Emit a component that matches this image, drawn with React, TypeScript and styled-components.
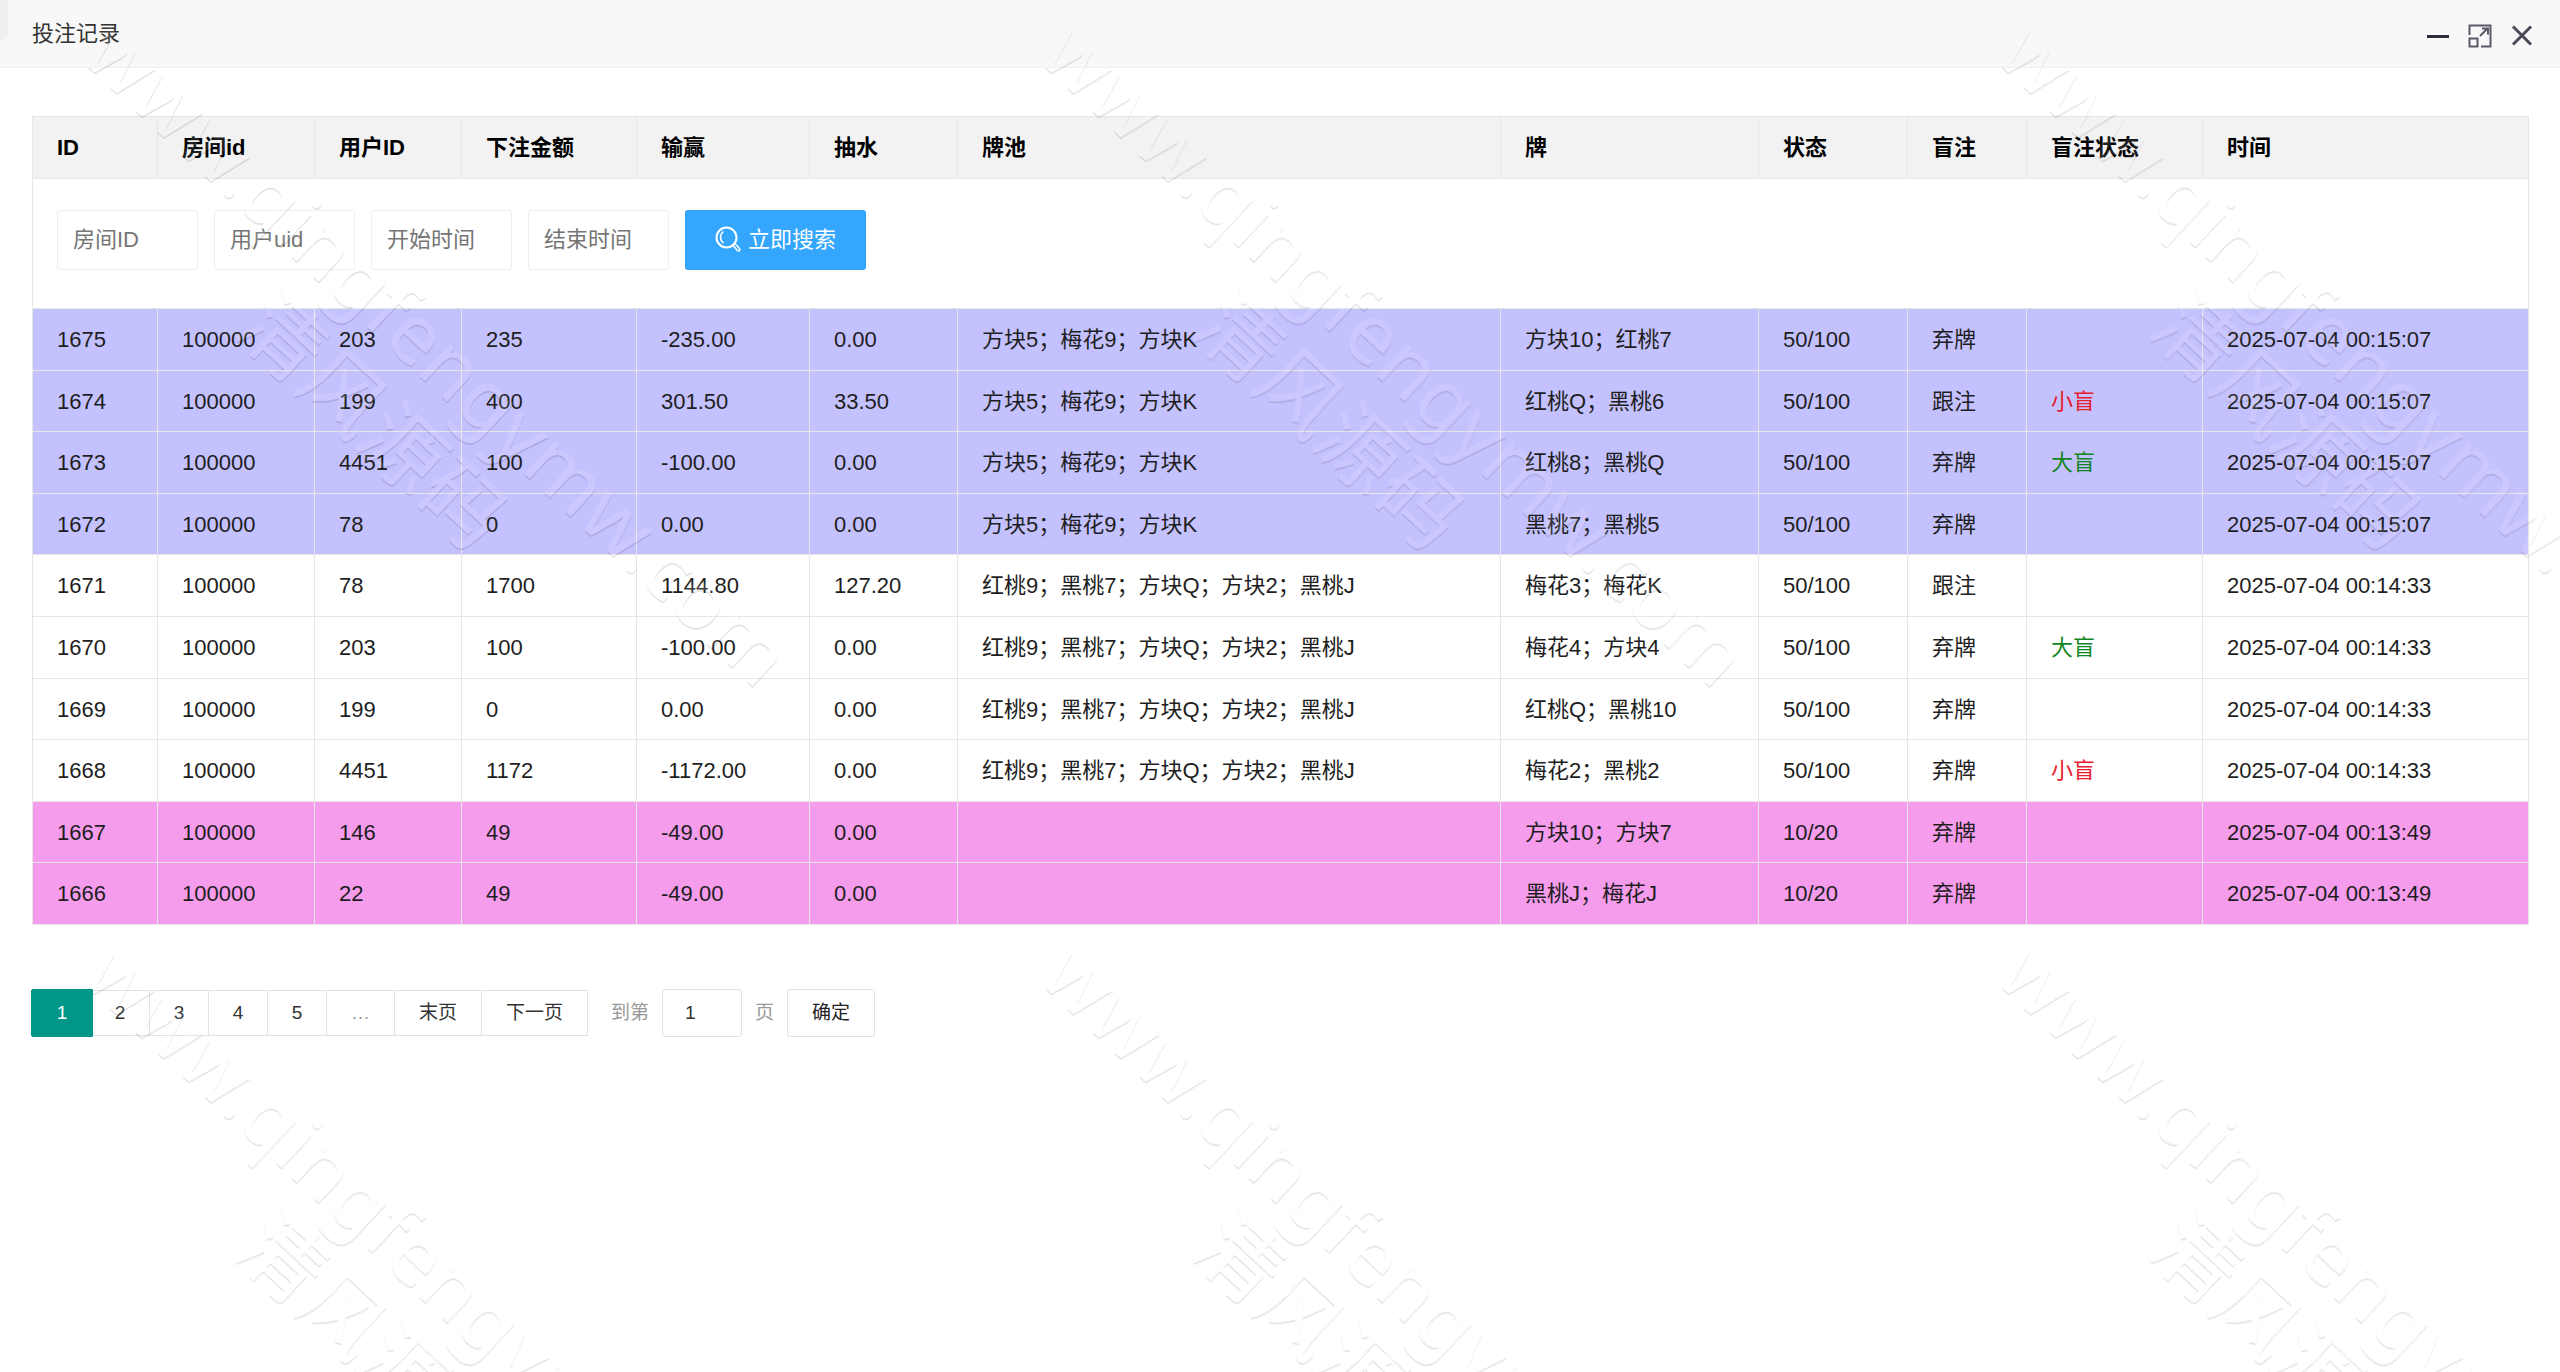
import React, { useState } from "react";
import styled, { createGlobalStyle, css } from "styled-components";

const GlobalStyle = createGlobalStyle`
  *, *::before, *::after { box-sizing: border-box; }
  html, body { margin: 0; background: #fff; }
  body, button, input {
    font-family: "Liberation Sans", "Noto Sans CJK SC", sans-serif;
    font-size: 22px;
    line-height: 30px;
    color: #1e1e1e;
  }
`;

const Window = styled.div`
  position: relative;
  min-height: 100vh;
  overflow: hidden;
  background: #fff;
`;

const TitleBar = styled.header`
  display: flex;
  align-items: center;
  justify-content: space-between;
  height: 68px;
  padding: 0 22px 0 32px;
  background: #f8f8f8;
  border-bottom: 1px solid #f0f0f0;

  &::before {
    content: "";
    position: absolute;
    left: 0;
    top: 0;
    width: 8px;
    height: 40px;
    background: #efefef;
    border-radius: 0 0 6px 0;
  }
`;

const Title = styled.h1`
  margin: 0;
  font-size: 22px;
  font-weight: 400;
  line-height: 30px;
  color: #333;
`;

const WindowControls = styled.div`
  display: flex;
  gap: 10px;
  padding-top: 4px;
`;

const ControlButton = styled.button`
  display: flex;
  width: 32px;
  height: 32px;
  align-items: center;
  justify-content: center;
  padding: 0;
  border: 0;
  background: none;
  cursor: pointer;
`;

const Content = styled.main`
  padding: 48px 32px;
`;

const Table = styled.table`
  width: 100%;
  table-layout: fixed;
  border-collapse: collapse;
`;

const Column = styled.col<{ $width: number }>`
  width: ${(p) => p.$width}px;
`;

const cell = css`
  padding: 1px 24px 0;
  border: 1px solid #e6e6e6;
  text-align: left;
  white-space: nowrap;
`;

const HeadCell = styled.th`
  ${cell}
  height: 62px;
  background: #f2f2f2;
  font-weight: 700;
  color: #000;
`;

const SearchCell = styled.td`
  ${cell}
  padding: 31px 24px 38px;
`;

type Tone = "violet" | "plain" | "pink";
const toneColors: Record<Tone, string> = { violet: "#c4c1ff", plain: "#fff", pink: "#f69ced" };

const Row = styled.tr<{ $tone: Tone }>`
  height: 62px;
  background: ${(p) => toneColors[p.$tone]};

  &:nth-child(5n + 2),
  &:nth-child(5n + 4) {
    height: 61px;
  }
`;

const Cell = styled.td`
  ${cell}
`;

const Blind = styled.span<{ $color: string }>`
  color: ${(p) => p.$color};
`;

const SearchForm = styled.form`
  display: flex;
  gap: 16px;
`;

const SearchInput = styled.input`
  width: 141px;
  height: 60px;
  padding: 0 15px;
  border: 1px solid #eee;
  border-radius: 3px;
  background: #fff;
  outline: none;

  &::placeholder { color: #757575; opacity: 1; }
`;

const SearchButton = styled.button`
  display: flex;
  align-items: center;
  gap: 7px;
  height: 60px;
  padding: 0 30px;
  border: 0;
  border-radius: 3px;
  background: #34a6fe;
  color: #fff;
  white-space: nowrap;
  cursor: pointer;
`;

const Pager = styled.nav`
  display: flex;
  align-items: center;
  margin: 64px 0 0 -1px;
  font-size: 19px;
  color: #999;
`;

const PageLink = styled.a<{ $wide?: boolean; $active?: boolean }>`
  min-width: 60px;
  height: 46px;
  margin-right: -1px;
  padding: 0 ${(p) => (p.$wide ? 24 : 8)}px;
  border: 1px solid #e2e2e2;
  background: #fff;
  color: #333;
  line-height: 44px;
  text-align: center;
  text-decoration: none;

  ${(p) =>
    p.$active &&
    css`
      z-index: 1;
      min-width: 62px;
      height: 48px;
      margin-right: -3px;
      border-color: #009688;
      border-radius: 2px 0 0 2px;
      background: #009688;
      color: #fff;
      line-height: 46px;
    `}
`;

const Ellipsis = styled.span`
  height: 46px;
  margin-right: -1px;
  padding: 0 24px;
  border: 1px solid #e2e2e2;
  line-height: 44px;
`;

const JumpForm = styled.form`
  display: flex;
  align-items: center;
  gap: 13px;
  margin-left: 24px;
`;

const JumpLabel = styled.label`
  display: flex;
  align-items: center;
  gap: 13px;
`;

const JumpInput = styled.input`
  width: 80px;
  height: 48px;
  padding: 0 22px;
  border: 1px solid #e2e2e2;
  border-radius: 3px;
  font-size: 19px;
  color: #333;
`;

const JumpButton = styled.button`
  height: 48px;
  padding: 0 24px;
  border: 1px solid #e2e2e2;
  border-radius: 3px;
  background: #fff;
  font-size: 19px;
  color: #222;
  cursor: pointer;
`;

const WatermarkLayer = styled.svg`
  position: absolute;
  inset: 0;
  width: 100%;
  height: 100%;
  pointer-events: none;
`;

const WatermarkText = styled.text`
  font-family: "Noto Sans", "Noto Sans CJK SC", sans-serif;
  font-size: 82px;
  fill: #fff;
`;

const columns = [
  { title: "ID", width: 125 },
  { title: "房间id", width: 157 },
  { title: "用户ID", width: 147 },
  { title: "下注金额", width: 175 },
  { title: "输赢", width: 173 },
  { title: "抽水", width: 148 },
  { title: "牌池", width: 543 },
  { title: "牌", width: 258 },
  { title: "状态", width: 149 },
  { title: "盲注", width: 119 },
  { title: "盲注状态", width: 176 },
  { title: "时间", width: 326 },
];

interface Bet {
  id: number;
  room: number;
  user: number;
  amount: number;
  result: string;
  rake: string;
  pool: string;
  hand: string;
  blinds: string;
  action: string;
  blind?: "小盲" | "大盲";
  time: string;
  tone: Tone;
}

const poolA = "方块5；梅花9；方块K";
const poolB = "红桃9；黑桃7；方块Q；方块2；黑桃J";
const timeA = "2025-07-04 00:15:07";
const timeB = "2025-07-04 00:14:33";
const timeC = "2025-07-04 00:13:49";

const bets: Bet[] = [
  { id: 1675, room: 100000, user: 203, amount: 235, result: "-235.00", rake: "0.00", pool: poolA, hand: "方块10；红桃7", blinds: "50/100", action: "弃牌", time: timeA, tone: "violet" },
  { id: 1674, room: 100000, user: 199, amount: 400, result: "301.50", rake: "33.50", pool: poolA, hand: "红桃Q；黑桃6", blinds: "50/100", action: "跟注", blind: "小盲", time: timeA, tone: "violet" },
  { id: 1673, room: 100000, user: 4451, amount: 100, result: "-100.00", rake: "0.00", pool: poolA, hand: "红桃8；黑桃Q", blinds: "50/100", action: "弃牌", blind: "大盲", time: timeA, tone: "violet" },
  { id: 1672, room: 100000, user: 78, amount: 0, result: "0.00", rake: "0.00", pool: poolA, hand: "黑桃7；黑桃5", blinds: "50/100", action: "弃牌", time: timeA, tone: "violet" },
  { id: 1671, room: 100000, user: 78, amount: 1700, result: "1144.80", rake: "127.20", pool: poolB, hand: "梅花3；梅花K", blinds: "50/100", action: "跟注", time: timeB, tone: "plain" },
  { id: 1670, room: 100000, user: 203, amount: 100, result: "-100.00", rake: "0.00", pool: poolB, hand: "梅花4；方块4", blinds: "50/100", action: "弃牌", blind: "大盲", time: timeB, tone: "plain" },
  { id: 1669, room: 100000, user: 199, amount: 0, result: "0.00", rake: "0.00", pool: poolB, hand: "红桃Q；黑桃10", blinds: "50/100", action: "弃牌", time: timeB, tone: "plain" },
  { id: 1668, room: 100000, user: 4451, amount: 1172, result: "-1172.00", rake: "0.00", pool: poolB, hand: "梅花2；黑桃2", blinds: "50/100", action: "弃牌", blind: "小盲", time: timeB, tone: "plain" },
  { id: 1667, room: 100000, user: 146, amount: 49, result: "-49.00", rake: "0.00", pool: "", hand: "方块10；方块7", blinds: "10/20", action: "弃牌", time: timeC, tone: "pink" },
  { id: 1666, room: 100000, user: 22, amount: 49, result: "-49.00", rake: "0.00", pool: "", hand: "黑桃J；梅花J", blinds: "10/20", action: "弃牌", time: timeC, tone: "pink" },
];

const searchFields = [
  { name: "room", label: "房间ID" },
  { name: "uid", label: "用户uid" },
  { name: "start", label: "开始时间" },
  { name: "end", label: "结束时间" },
];

const MinimizeIcon = () => (
  <svg width="24" height="24" viewBox="0 0 24 24" fill="none" stroke="#2d2c3b" strokeWidth="3">
    <path d="M1 12.5h22" />
  </svg>
);

const RestoreIcon = () => (
  <svg width="24" height="24" viewBox="0 0 24 24" fill="none" stroke="#5a5966" strokeWidth="2">
    <path d="M1.5 11V1.5h21v21H13" />
    <rect x="1.5" y="14.5" width="8" height="8" />
    <path d="M12 12l8-8M14 4.500h6v6" />
  </svg>
);

const CloseIcon = () => (
  <svg width="24" height="24" viewBox="0 0 24 24" fill="none" stroke="#4a4957" strokeWidth="3">
    <path d="M3 2.500l18 18M21 2.500l-18 18" />
  </svg>
);

const SearchIcon = () => (
  <svg width="26" height="28" viewBox="0 0 26 28" fill="none" stroke="#fff" strokeWidth="2">
    <circle cx="11.500" cy="11.500" r="10" />
    <path d="M8.500 5.500a7 7 0 0 0 0 11.500" strokeWidth="1.500" />
    <path d="M18 19.500l2-2 4.500 5a1.400 1.400 0 0 1-2 2z" strokeWidth="1.500" />
  </svg>
);

const Watermark = () => (
  <WatermarkLayer aria-hidden="true">
    <defs>
      <filter id="emboss" x="-10" y="-10" width="2600" height="2000" filterUnits="userSpaceOnUse">
        <feOffset in="SourceAlpha" dx="0" dy="2" result="low" />
        <feComposite in="low" in2="SourceAlpha" operator="out" result="edge" />
        <feFlood floodColor="#000" floodOpacity="0.11" />
        <feComposite in2="edge" operator="in" result="shade" />
        <feComponentTransfer in="SourceGraphic" result="face">
          <feFuncA type="linear" slope="0.12" />
        </feComponentTransfer>
        <feMerge>
          <feMergeNode in="face" />
          <feMergeNode in="shade" />
        </feMerge>
      </filter>
    </defs>
    <g filter="url(#emboss)">
      {[0, 921].map((y) =>
        [0, 957, 1914].map((x) => (
          <g key={`${x}-${y}`} transform={`translate(${x + 79} ${y + 58}) rotate(43)`}>
            <WatermarkText>www.qingfengymw.com</WatermarkText>
            <WatermarkText x="298" y="94">清风源码</WatermarkText>
          </g>
        ))
      )}
    </g>
  </WatermarkLayer>
);

const stop = (e: React.SyntheticEvent) => e.preventDefault();

export default function App() {
  const [page, setPage] = useState("1");

  return (
    <>
      <GlobalStyle />
      <Window>
        <TitleBar>
          <Title>投注记录</Title>
          <WindowControls>
            <ControlButton type="button" aria-label="最小化"><MinimizeIcon /></ControlButton>
            <ControlButton type="button" aria-label="还原"><RestoreIcon /></ControlButton>
            <ControlButton type="button" aria-label="关闭"><CloseIcon /></ControlButton>
          </WindowControls>
        </TitleBar>
        <Content>
          <Table>
            <colgroup>
              {columns.map((c) => <Column key={c.title} $width={c.width} />)}
            </colgroup>
            <thead>
              <tr>{columns.map((c) => <HeadCell key={c.title} scope="col">{c.title}</HeadCell>)}</tr>
              <tr>
                <SearchCell colSpan={columns.length}>
                  <SearchForm onSubmit={stop}>
                    {searchFields.map((f) => (
                      <SearchInput key={f.name} name={f.name} type="text" placeholder={f.label} aria-label={f.label} />
                    ))}
                    <SearchButton type="submit"><SearchIcon />立即搜索</SearchButton>
                  </SearchForm>
                </SearchCell>
              </tr>
            </thead>
            <tbody>
              {bets.map((b) => (
                <Row key={b.id} $tone={b.tone}>
                  <Cell>{b.id}</Cell>
                  <Cell>{b.room}</Cell>
                  <Cell>{b.user}</Cell>
                  <Cell>{b.amount}</Cell>
                  <Cell>{b.result}</Cell>
                  <Cell>{b.rake}</Cell>
                  <Cell>{b.pool}</Cell>
                  <Cell>{b.hand}</Cell>
                  <Cell>{b.blinds}</Cell>
                  <Cell>{b.action}</Cell>
                  <Cell>{b.blind && <Blind $color={b.blind === "小盲" ? "#e6202e" : "#12861e"}>{b.blind}</Blind>}</Cell>
                  <Cell>{b.time}</Cell>
                </Row>
              ))}
            </tbody>
          </Table>
          <Pager aria-label="分页">
            {[1, 2, 3, 4, 5].map((n) => (
              <PageLink key={n} href={`#${n}`} $active={n === 1}>{n}</PageLink>
            ))}
            <Ellipsis>…</Ellipsis>
            <PageLink href="#last" $wide>末页</PageLink>
            <PageLink href="#next" $wide>下一页</PageLink>
            <JumpForm onSubmit={stop}>
              <JumpLabel>
                到第
                <JumpInput type="text" inputMode="numeric" value={page} onChange={(e) => setPage(e.target.value)} />
                页
              </JumpLabel>
              <JumpButton type="submit">确定</JumpButton>
            </JumpForm>
          </Pager>
        </Content>
        <Watermark />
      </Window>
    </>
  );
}
